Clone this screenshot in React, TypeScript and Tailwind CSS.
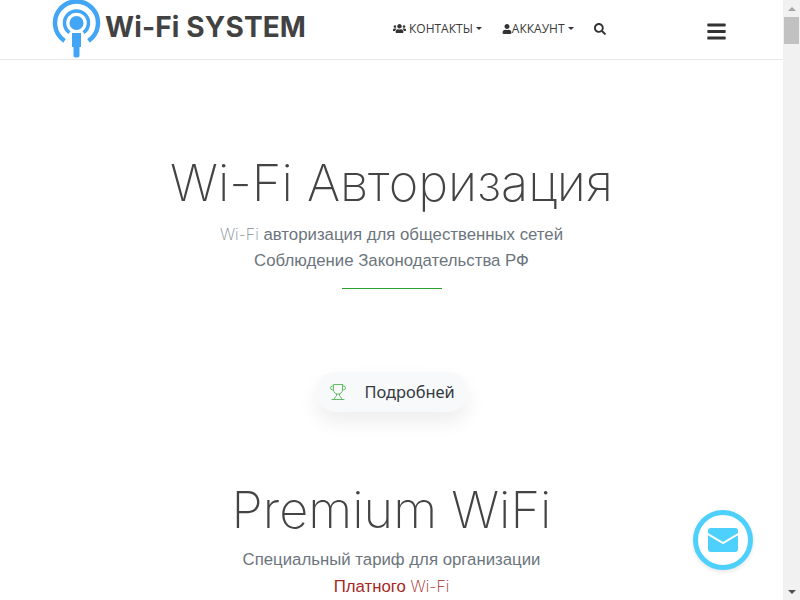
import React from "react";
import { FaUsers, FaUser, FaSearch, FaBars } from "react-icons/fa";
import { LuTrophy } from "react-icons/lu";

const Logo = () => (
  <svg width="50" height="60" viewBox="0 0 50 60" className="shrink-0">
    <circle cx="24.5" cy="23" r="7" fill="#42a5f5" />
    <path d="M17.5 32.7 A12 12 0 1 1 31.5 32.7" fill="none" stroke="#42a5f5" strokeWidth="3.5" />
    <path d="M12.5 40.8 A21.5 21.5 0 1 1 36.5 40.8" fill="none" stroke="#42a5f5" strokeWidth="4.5" />
    <path d="M20 33 h9 v14 h-1.5 v8.5 q0 2 -3 2 t-3 -2 v-8.5 h-1.5 z" fill="#42a5f5" />
  </svg>
);

const Mail = () => (
  <svg width="30" height="24" viewBox="0 0 30 24">
    <rect width="30" height="24" rx="3" fill="#4dd0fb" />
    <path d="M0 6 L15 15 L30 6" fill="none" stroke="#fff" strokeWidth="2" />
  </svg>
);

const Caret = () => (
  <span className="ml-[3px] inline-block w-0 h-0 border-x-[3px] border-x-transparent border-t-[3px] border-t-[#333] align-middle" />
);

export default function App() {
  return (
    <div className="flex h-[600px] w-[800px] overflow-hidden bg-white font-['Inter','Liberation_Sans',sans-serif]">
      <div className="relative h-[600px] w-[783px] overflow-hidden">
        <header className="flex h-[60px] items-start border-b border-[#e7e7e7] pl-[52px]">
          <div className="flex h-[59px] w-[341px] items-start">
            <Logo />
            <span className="mt-[10px] ml-[3px] text-[28px] leading-[34px] font-bold tracking-[0.15px] text-[#424242]">Wi-Fi SYSTEM</span>
          </div>
          <nav className="mt-[21px] flex items-center text-[12px] leading-[15px] text-[#3a3a3a] font-['Open_Sans',sans-serif]">
            <span className="flex items-center"><FaUsers className="mr-[3px] text-[13px] text-[#333]" />КОНТАКТЫ<Caret /></span>
            <span className="ml-[20px] flex items-center"><FaUser className="text-[10px] text-[#333]" />АККАУНТ<Caret /></span>
            <FaSearch className="ml-[20px] text-[12px] text-[#333]" />
          </nav>
          <FaBars className="ml-[100px] mt-[21px] text-[21px] text-[#333]" />
        </header>

        <main className="flex flex-col items-center">
          <h1 className="mt-[90px] text-[50.5px] leading-[66px] font-extralight text-[#444]">Wi-Fi Авторизация</h1>
          <p className="mt-[5px] text-[16.8px] leading-[26px] text-[#6c757d] text-center font-['Liberation_Sans',sans-serif]">
            <span className="text-[16px] font-extralight text-[#868e96] font-['Inter',sans-serif]">Wi-Fi</span> авторизация для общественных сетей
            <br />
            Соблюдение Законодательства РФ
          </p>
          <div className="mt-[14px] h-px w-[100px] bg-[#28a12f]" />
          <button className="mt-[83px] flex h-[40px] w-[152px] items-center rounded-[20px] bg-[#f8f9fa] pl-[13px] shadow-[0_10px_20px_rgba(0,0,0,0.07)]">
            <LuTrophy strokeWidth={1.25} className="text-[18px] text-[#5cb85c]" />
            <span className="ml-[18px] text-[16.4px] text-[#343a40] font-['Noto_Sans',sans-serif]">Подробней</span>
          </button>
          <h2 className="mt-[65px] text-[50.5px] leading-[66px] font-extralight text-[#444]">Premium WiFi</h2>
          <p className="mt-[4px] text-[16.8px] leading-[26px] text-[#6c757d] text-center font-['Liberation_Sans',sans-serif]">
            Специальный тариф для организации
            <br />
            <span className="text-[#a5281e]">Платного</span> <span className="text-[16px] font-extralight text-[#a5281e] font-['Inter',sans-serif]">Wi-Fi</span>
          </p>
        </main>

        <div className="absolute left-[693px] top-[510px] flex h-[60px] w-[60px] items-center justify-center rounded-full border-[5px] border-[#4dd0fb] bg-white shadow-[0_2px_4px_rgba(0,0,0,0.1)]">
          <Mail />
        </div>
      </div>

      <div className="flex h-[600px] w-[17px] flex-col bg-[#f1f1f1]">
        <div className="flex h-[17px] items-center justify-center">
          <span className="h-0 w-0 border-x-[4px] border-x-transparent border-b-[4px] border-b-[#a3a3a3]" />
        </div>
        <div className="mx-auto h-[27px] w-[15px] bg-[#c1c1c1]" />
        <div className="flex-1" />
        <div className="flex h-[17px] items-center justify-center">
          <span className="h-0 w-0 border-x-[4px] border-x-transparent border-t-[4px] border-t-[#505050]" />
        </div>
      </div>
    </div>
  );
}
